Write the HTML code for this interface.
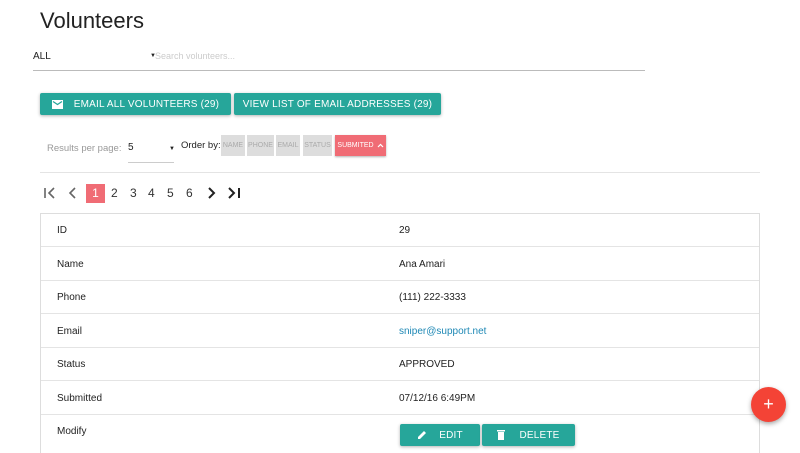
<!DOCTYPE html>
<html><head><style>
*{box-sizing:border-box;margin:0;padding:0}
body{width:800px;height:450px;overflow:hidden;background:#fff;font-family:"Liberation Sans",Roboto,sans-serif;color:#222;position:relative}
.a{position:absolute}
.btn{position:absolute;background:#26a69a;color:#fff;font-size:10px;letter-spacing:.2px;display:flex;align-items:center;justify-content:center;box-shadow:0 1px 3px rgba(0,0,0,.3);border-radius:2px}
.chip{position:absolute;top:135px;height:21px;background:#ddd;color:#aaa;font-size:7px;display:flex;align-items:center;justify-content:center}
.row{position:absolute;left:41px;width:718px;height:33.5px;border-bottom:1px solid #e4e4e4;font-size:10px}
.row span{position:absolute;top:12px}
.pg{position:absolute;top:186px;font-size:12px;color:#333}
.ic{position:absolute;top:186px}
</style></head><body>
<div class="a" style="left:40px;top:8px;font-size:22px;color:#222">Volunteers</div>
<div class="a" style="left:33px;top:51px;font-size:10px">ALL</div>
<div class="a" style="left:150px;top:53px;font-size:6px">▼</div>
<div class="a" style="left:155px;top:51px;font-size:9px;color:#ccc">Search volunteers...</div>
<div class="a" style="left:33px;top:70px;width:612px;height:1px;background:#bbb"></div>
<div class="btn" style="left:40px;top:93px;width:191px;height:22px"><svg width="11" height="9" viewBox="0 0 11 9" style="margin-right:11px"><rect width="11" height="9" fill="#fff"/><path d="M1 1.5L5.5 4.5L10 1.5" stroke="#26a69a" fill="none" stroke-width="1.2"/></svg>EMAIL ALL VOLUNTEERS (29)</div>
<div class="btn" style="left:234px;top:93px;width:207px;height:22px">VIEW LIST OF EMAIL ADDRESSES (29)</div>
<div class="a" style="left:47px;top:143px;font-size:9.5px;color:#999">Results per page:</div>
<div class="a" style="left:128px;top:142px;font-size:10px">5</div>
<div class="a" style="left:169px;top:146px;font-size:6px">▼</div>
<div class="a" style="left:128px;top:162px;width:46px;height:1px;background:#ccc"></div>
<div class="a" style="left:181px;top:140px;font-size:9.5px">Order by:</div>
<div class="chip" style="left:221px;width:24px">NAME</div>
<div class="chip" style="left:247px;width:27px">PHONE</div>
<div class="chip" style="left:276px;width:24px">EMAIL</div>
<div class="chip" style="left:303px;width:29px">STATUS</div>
<div class="chip" style="left:335px;width:51px;background:#f06c75;color:#fff;box-shadow:0 1px 2px rgba(0,0,0,.3)">SUBMITED <svg width="7" height="5" viewBox="0 0 7 5" style="margin-left:3px"><path d="M1 4L3.5 1.5L6 4" stroke="#fff" fill="none" stroke-width="1.2"/></svg></div>
<div class="a" style="left:40px;top:172px;width:720px;height:1px;background:#e4e4e4"></div>
<svg class="ic" style="left:43px" width="14" height="14" viewBox="0 0 14 14"><path d="M2 2V12M11 2L6 7L11 12" stroke="#666" fill="none" stroke-width="1.6"/></svg>
<svg class="ic" style="left:66px" width="14" height="14" viewBox="0 0 14 14"><path d="M9 2L4 7L9 12" stroke="#666" fill="none" stroke-width="1.6"/></svg>
<div class="a" style="left:86px;top:184px;width:19px;height:19px;background:#f06c75;color:#fff;font-size:12px;text-align:center;line-height:19px">1</div>
<div class="pg" style="left:111px">2</div><div class="pg" style="left:130px">3</div><div class="pg" style="left:148px">4</div><div class="pg" style="left:167px">5</div><div class="pg" style="left:186px">6</div>
<svg class="ic" style="left:205px" width="14" height="14" viewBox="0 0 14 14"><path d="M4 2L9 7L4 12" stroke="#222" fill="none" stroke-width="2"/></svg>
<svg class="ic" style="left:227px" width="16" height="14" viewBox="0 0 16 14"><path d="M2 2L7 7L2 12M12 2V12" stroke="#222" fill="none" stroke-width="2"/></svg>
<div class="a" style="left:40px;top:213px;width:720px;height:240px;border:1px solid #ddd;border-bottom:none"></div>
<div class="row" style="top:213px"><span style="left:16px">ID</span><span style="left:358px">29</span></div>
<div class="row" style="top:247px"><span style="left:16px">Name</span><span style="left:358px">Ana Amari</span></div>
<div class="row" style="top:280px"><span style="left:16px">Phone</span><span style="left:358px">(111) 222-3333</span></div>
<div class="row" style="top:314px"><span style="left:16px">Email</span><span style="left:358px;color:#1e88b5">sniper@support.net</span></div>
<div class="row" style="top:347px"><span style="left:16px">Status</span><span style="left:358px">APPROVED</span></div>
<div class="row" style="top:381px"><span style="left:16px">Submitted</span><span style="left:358px">07/12/16 6:49PM</span></div>
<div class="row" style="top:414px;border:none"><span style="left:16px">Modify</span></div>
<div class="btn" style="left:400px;top:424px;width:80px;height:22px"><svg width="10" height="10" viewBox="0 0 10 10" style="margin-right:12px"><path d="M1 9L1 7L7 1L9 3L3 9Z" fill="#fff"/></svg>EDIT</div>
<div class="btn" style="left:482px;top:424px;width:93px;height:22px"><svg width="8" height="10" viewBox="0 0 8 10" style="margin-right:14px"><rect x="0" y="0" width="8" height="1.5" fill="#fff"/><rect x="1" y="2" width="6" height="8" fill="#fff"/></svg>DELETE</div>
<div class="a" style="left:751px;top:387px;width:35px;height:35px;border-radius:50%;background:#f44336;color:#fff;font-size:18px;text-align:center;line-height:34px;box-shadow:0 2px 5px rgba(0,0,0,.35)">+</div>
</body></html>
